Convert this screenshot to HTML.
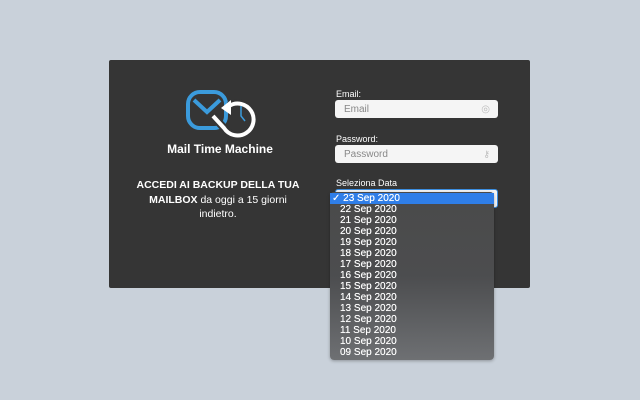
<!DOCTYPE html>
<html><head><meta charset="utf-8"><style>
body{margin:0;width:640px;height:400px;background:#c9d1da;font-family:"Liberation Sans",sans-serif;position:relative;overflow:hidden}
.panel{position:absolute;left:109px;top:60px;width:421px;height:228px;background:#353535;border-radius:2px}
.t{position:absolute;color:#fff}
.lbl{position:absolute;color:#fff;font-size:9px;left:336px}
.inp{position:absolute;left:335px;width:163px;height:18px;background:#f5f5f5;border-radius:3px;color:#888;font-size:10px;box-sizing:border-box;padding-left:9px;display:flex;align-items:center}
.dd{position:absolute;left:330px;top:192px;width:164px;height:168px;border-radius:4px;background:linear-gradient(#4a4a4a,#4c4d4f 50%,#6e7073);box-shadow:0 1px 3px rgba(0,0,0,.3)}
.it{height:11px;line-height:11px;font-size:10px;color:#fff;padding-left:10px;text-shadow:0 0 .4px #fff}
</style></head><body>
<div class="panel"></div>
<svg style="position:absolute;left:180px;top:85px" width="90" height="55">
<rect x="8" y="7" width="38" height="36" rx="12" fill="none" stroke="#3b9bdc" stroke-width="4"/>
<path d="M14 15 L27 27 L40 15" fill="none" stroke="#3b9bdc" stroke-width="4"/>
<path d="M49 21 A16 16 0 1 1 44 43 L33 31" fill="none" stroke="#353535" stroke-width="8"/>
<path d="M49 21 A16 16 0 1 1 44 43 L33 31" fill="none" stroke="#fff" stroke-width="4"/>
<path d="M41 23 L51 15 L51 30 Z" fill="#fff"/>
<path d="M61 21 V31 L65 36" fill="none" stroke="#3b9bdc" stroke-width="1.5"/>
</svg>
<div class="t" style="left:150px;width:140px;text-align:center;top:142px;font-size:12px;font-weight:bold">Mail Time Machine</div>
<div class="t" style="left:130px;width:176px;text-align:center;top:178px;font-size:10.5px;line-height:14.5px;white-space:nowrap"><b>ACCEDI AI BACKUP DELLA TUA</b><br><b>MAILBOX</b> da oggi a 15 giorni<br>indietro.</div>
<div class="lbl" style="top:89px">Email:</div>
<div class="inp" style="top:100px">Email<span style="position:absolute;right:8px;color:#bbb">◎</span></div>
<div class="lbl" style="top:134px">Password:</div>
<div class="inp" style="top:145px">Password<span style="position:absolute;right:8px;color:#bbb;font-size:9px">⚷</span></div>
<div class="lbl" style="top:178px">Seleziona Data</div>
<div style="position:absolute;left:335px;top:189px;width:163px;height:19px;background:#f5f5f5;border:1px solid #3d8fe0;border-radius:3px;box-sizing:border-box"></div>
<div class="dd">
<div class="it" style="background:#2f7ee8;padding-left:2px;margin-top:1px">✓ 23 Sep 2020</div>
<div class="it">22 Sep 2020</div><div class="it">21 Sep 2020</div><div class="it">20 Sep 2020</div><div class="it">19 Sep 2020</div><div class="it">18 Sep 2020</div><div class="it">17 Sep 2020</div><div class="it">16 Sep 2020</div><div class="it">15 Sep 2020</div><div class="it">14 Sep 2020</div><div class="it">13 Sep 2020</div><div class="it">12 Sep 2020</div><div class="it">11 Sep 2020</div><div class="it">10 Sep 2020</div><div class="it">09 Sep 2020</div>
</div>
</body></html>
